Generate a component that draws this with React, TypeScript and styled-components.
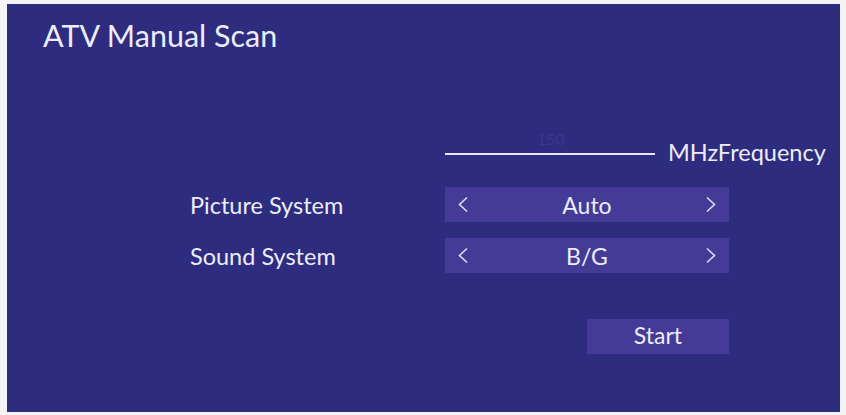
import React from 'react'
import styled, { createGlobalStyle } from 'styled-components'

const Global = createGlobalStyle`
  html, body {
    margin: 0;
    padding: 0;
    background: #f4f4f8;
  }
  body {
    font-family: Lato, "Open Sans", "Liberation Sans", sans-serif;
  }
`

const Page = styled.div`
  width: 846px;
  height: 415px;
  box-sizing: border-box;
  padding: 4px 6px 3px 7px;
`

const Panel = styled.div`
  height: 100%;
  background: #2e2c7e;
  color: #ececfa;
  display: flex;
  flex-direction: column;
`

const Title = styled.h1`
  margin: 0;
  padding: 13px 0 0 36px;
  font-size: 30.5px;
  font-weight: 400;
  line-height: 36px;
`

const Form = styled.div`
  margin: 86px 0 0 183px;
  display: grid;
  grid-template-columns: 255px 284px;
  row-gap: 16px;
  align-items: center;
`

const FreqRow = styled.div`
  grid-column: 2;
  display: flex;
  align-items: center;
  height: 30px;
  margin-bottom: 2px;
  white-space: nowrap;
`

const FreqInput = styled.div`
  position: relative;
  flex: 0 0 210px;
  height: 2px;
  background: #e6e6f6;
`

const FreqHint = styled.span`
  position: absolute;
  left: 92px;
  bottom: 7px;
  font-size: 16px;
  color: #3a3790;
`

const FreqLabel = styled.span`
  margin-left: 13px;
  padding-bottom: 4px;
  font-size: 23.5px;
`

const Label = styled.div`
  font-size: 23.5px;
`

const Selector = styled.div`
  height: 35px;
  background: #433b96;
  display: flex;
  align-items: center;
  justify-content: space-between;
  padding: 0 12px;
  font-size: 23px;
`

const Arrow = styled.svg`
  width: 12px;
  height: 17px;
  fill: none;
  stroke: #dcdcf4;
  stroke-width: 1.6;
`

const Value = styled.span`
  flex: 1;
  text-align: center;
`

const StartButton = styled.button`
  grid-column: 2;
  justify-self: end;
  margin-top: 30px;
  width: 142px;
  height: 35px;
  border: 0;
  padding: 0 0 3px;
  background: #433b96;
  color: #ececfa;
  font-family: inherit;
  font-size: 23px;
`

const Chevron = ({ dir }: { dir: 'left' | 'right' }) => (
  <Arrow viewBox="0 0 12 17">
    {dir === 'left' ? <path d="M10 1.5 L2.5 8.5 L10 15.5" /> : <path d="M2 1.5 L9.5 8.5 L2 15.5" />}
  </Arrow>
)

const Select = ({ value }: { value: string }) => (
  <Selector>
    <Chevron dir="left" />
    <Value>{value}</Value>
    <Chevron dir="right" />
  </Selector>
)

export default function App() {
  return (
    <Page>
      <Global />
      <Panel>
        <Title>ATV Manual Scan</Title>
        <Form>
          <FreqRow>
            <FreqInput>
              <FreqHint>150</FreqHint>
            </FreqInput>
            <FreqLabel>MHzFrequency</FreqLabel>
          </FreqRow>
          <Label>Picture System</Label>
          <Select value="Auto" />
          <Label>Sound System</Label>
          <Select value="B/G" />
          <StartButton>Start</StartButton>
        </Form>
      </Panel>
    </Page>
  )
}
